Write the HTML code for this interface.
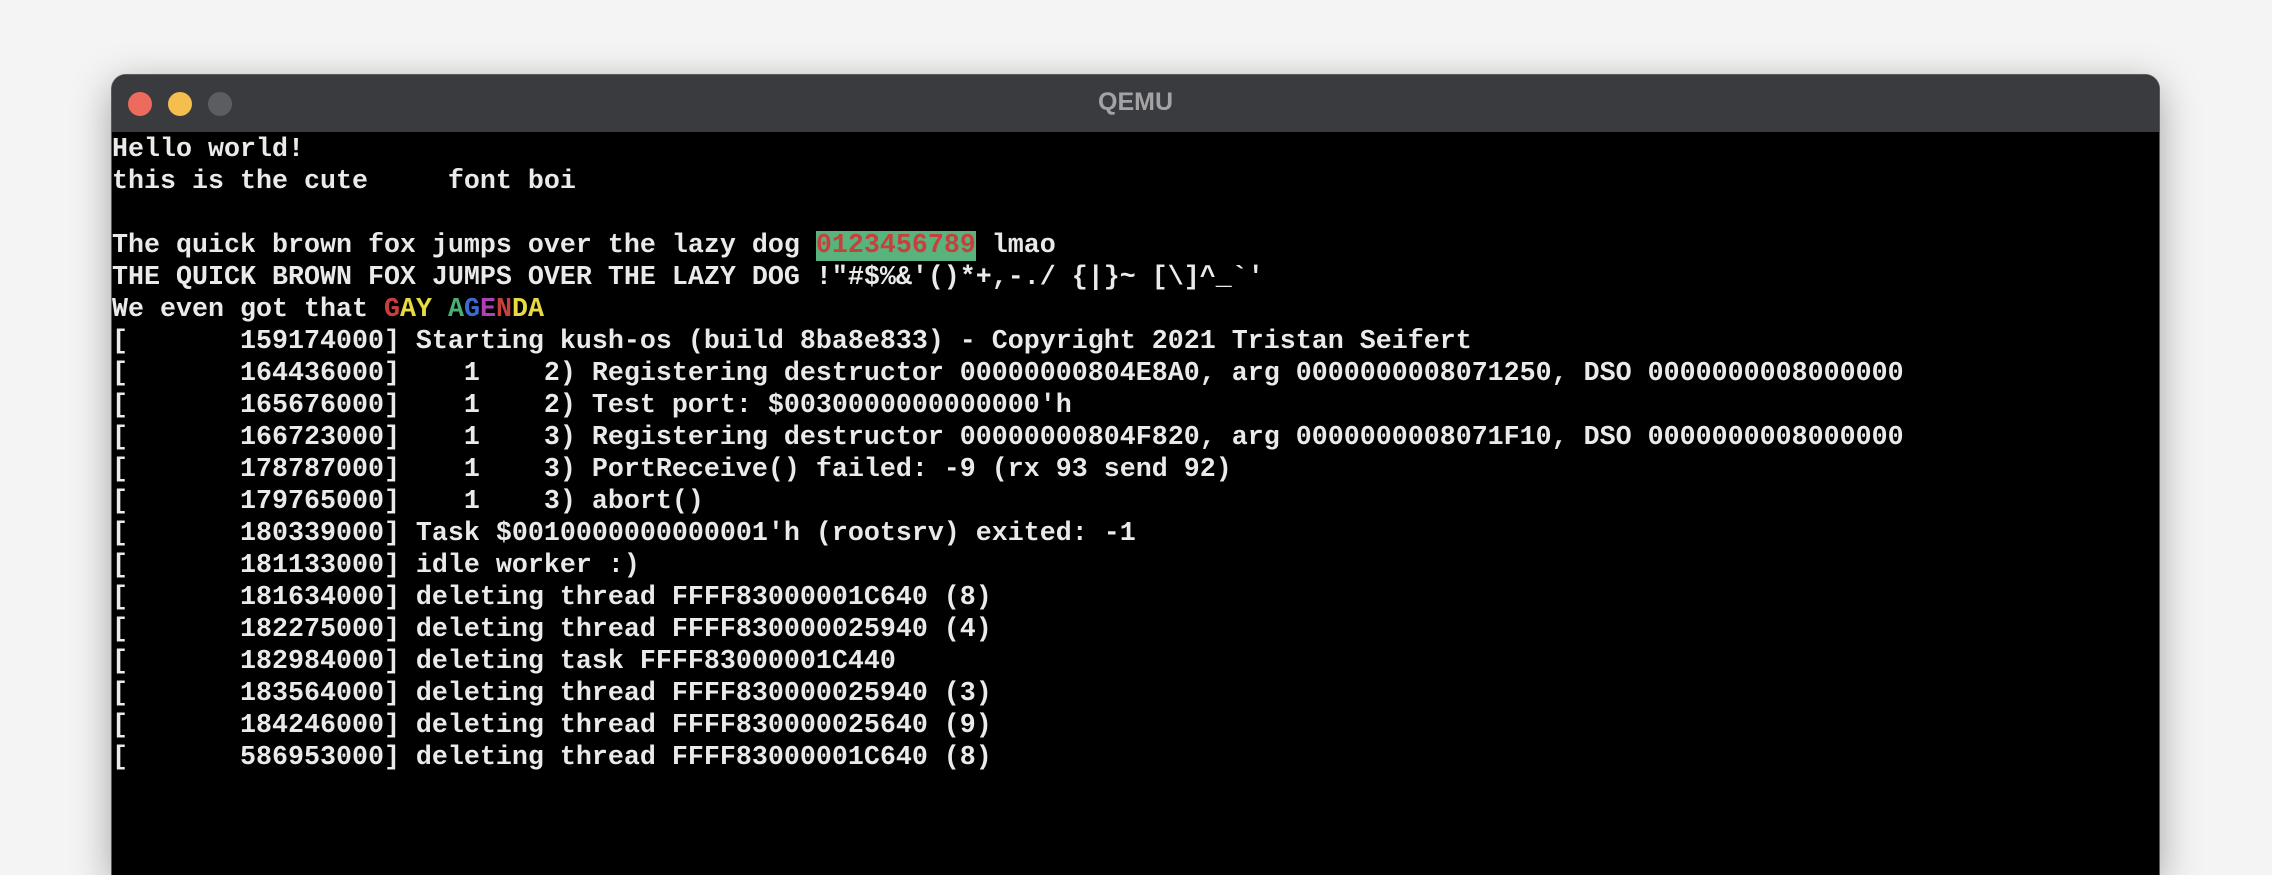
<!DOCTYPE html>
<html><head><meta charset="utf-8"><style>
html,body{margin:0;padding:0;width:2272px;height:816px;overflow:hidden;background:#f4f4f4;}
.win{position:absolute;left:112px;top:75px;width:2047px;height:800px;border-radius:14px 14px 0 0;overflow:hidden;background:#000;box-shadow:0 0 0 1px #5a5a5a,0 10px 40px rgba(0,0,0,0.35);}
.tb{position:absolute;left:0;top:0;width:100%;height:57px;background:#3a3b3f;}
.dot{position:absolute;top:17px;width:24px;height:24px;border-radius:50%;}
.title{position:absolute;left:0;width:100%;top:13px;text-align:center;font:bold 25px "Liberation Sans",sans-serif;color:#a3a3a6;}
pre{position:absolute;left:0;top:59px;margin:0;font:bold 26.67px/32px "Liberation Mono",monospace;color:#eaeaea;}
.hl{background:#58b47c;color:#c8403c;}
.r{color:#c8403c}.y{color:#e8dc40}.g{color:#48b070}.b{color:#3c6cd0}.p{color:#b040b8}
</style></head><body>
<div class="win">
<div class="tb">
<div class="dot" style="left:16px;background:#ec6a5e"></div>
<div class="dot" style="left:56px;background:#f4bf4f"></div>
<div class="dot" style="left:96px;background:#5c5d61"></div>
<div class="title">QEMU</div>
</div>
<pre>Hello world!
this is the cute     font boi

The quick brown fox jumps over the lazy dog <span class="hl">0123456789</span> lmao
THE QUICK BROWN FOX JUMPS OVER THE LAZY DOG !"#$%&amp;'()*+,-./ {|}~ [\]^_`'
We even got that <span class="r">G</span><span class="y">AY</span> <span class="g">A</span><span class="b">G</span><span class="p">E</span><span class="r">N</span><span class="y">DA</span>
[       159174000] Starting kush-os (build 8ba8e833) - Copyright 2021 Tristan Seifert
[       164436000]    1    2) Registering destructor 00000000804E8A0, arg 0000000008071250, DSO 0000000008000000
[       165676000]    1    2) Test port: $0030000000000000'h
[       166723000]    1    3) Registering destructor 00000000804F820, arg 0000000008071F10, DSO 0000000008000000
[       178787000]    1    3) PortReceive() failed: -9 (rx 93 send 92)
[       179765000]    1    3) abort()
[       180339000] Task $0010000000000001'h (rootsrv) exited: -1
[       181133000] idle worker :)
[       181634000] deleting thread FFFF83000001C640 (8)
[       182275000] deleting thread FFFF830000025940 (4)
[       182984000] deleting task FFFF83000001C440
[       183564000] deleting thread FFFF830000025940 (3)
[       184246000] deleting thread FFFF830000025640 (9)
[       586953000] deleting thread FFFF83000001C640 (8)</pre>
</div>
</body></html>
